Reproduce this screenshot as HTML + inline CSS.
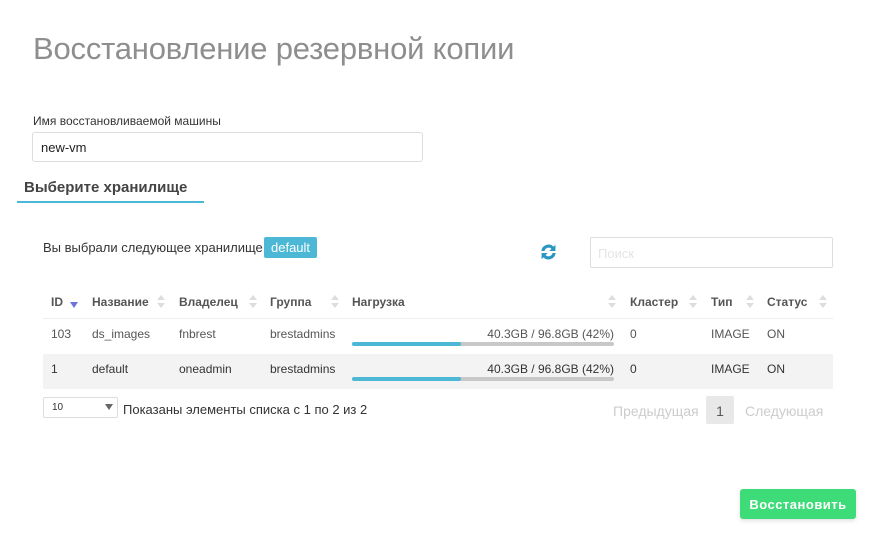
<!DOCTYPE html>
<html><head><meta charset="utf-8"><style>
*{margin:0;padding:0;box-sizing:border-box}
body{width:892px;height:554px;background:#fff;font-family:"Liberation Sans",sans-serif;color:#333;position:relative;overflow:hidden}
.a{position:absolute;white-space:nowrap}
.h{font-weight:bold;font-size:12px;color:#555}
.c{font-size:12px;color:#333}
.s{position:absolute;width:6px;height:14px}
.s:before{content:"";position:absolute;left:0;top:0;border-left:4px solid transparent;border-right:4px solid transparent;border-bottom:5px solid #ddd}
.s:after{content:"";position:absolute;left:0;top:8px;border-left:4px solid transparent;border-right:4px solid transparent;border-top:5px solid #ddd}
.bar{position:absolute;left:352px;width:262px;height:4px;background:#c8c8c8;border-radius:2px}
.bar i{position:absolute;left:0;top:0;height:4px;width:109px;background:#4cb8d5;border-radius:2px}
</style></head><body>
<div class="a" style="left:33px;top:31px;font-size:31px;color:#8e8e8e;letter-spacing:-0.2px">Восстановление резервной копии</div>
<div class="a" style="left:33px;top:114px;font-size:12px;color:#333">Имя восстановливаемой машины</div>
<div class="a" style="left:32px;top:132px;width:391px;height:30px;border:1px solid #ddd;border-radius:3px;font-size:13px;padding:7px 0 0 8px;color:#222">new-vm</div>
<div class="a" style="left:24px;top:179px;font-size:15px;font-weight:bold;color:#444">Выберите хранилище</div>
<div class="a" style="left:17px;top:201px;width:187px;height:2px;background:#4cb8d5"></div>
<div class="a" style="left:43px;top:240px;font-size:13px;color:#333">Вы выбрали следующее хранилище:</div>
<div class="a" style="left:264px;top:237px;width:53px;height:21px;background:#4cb8d5;border-radius:2px;color:#fff;font-size:13px;padding:3px 0 0 7px">default</div>
<svg class="a" style="left:539px;top:242px" width="19" height="20" viewBox="0 0 20 20"><path d="M2.5 9a7.5 7.5 0 0 1 12.8-4.6L17.3 2.5V9h-6.5l2.3-2.3A4.3 4.3 0 0 0 5.8 9z M17.5 11a7.5 7.5 0 0 1-12.8 4.6L2.7 17.5V11h6.5l-2.3 2.3A4.3 4.3 0 0 0 14.2 11z" fill="#2a97c3"/></svg>
<div class="a" style="left:590px;top:237px;width:243px;height:31px;border:1px solid #ddd;border-radius:2px;font-size:13px;color:#e4e4e4;padding:8px 0 0 7px">Поиск</div>

<div class="a h" style="left:51px;top:295px">ID</div>
<div class="a" style="left:70px;top:302px;border-left:4px solid transparent;border-right:4px solid transparent;border-top:6px solid #6f72d6"></div>
<div class="a h" style="left:92px;top:295px">Название</div><div class="s" style="left:157px;top:295px"></div>
<div class="a h" style="left:179px;top:295px">Владелец</div><div class="s" style="left:249px;top:295px"></div>
<div class="a h" style="left:270px;top:295px">Группа</div><div class="s" style="left:331px;top:295px"></div>
<div class="a h" style="left:352px;top:295px">Нагрузка</div><div class="s" style="left:608px;top:295px"></div>
<div class="a h" style="left:630px;top:295px">Кластер</div><div class="s" style="left:689px;top:295px"></div>
<div class="a h" style="left:711px;top:295px">Тип</div><div class="s" style="left:746px;top:295px"></div>
<div class="a h" style="left:767px;top:295px">Статус</div><div class="s" style="left:819px;top:295px"></div>
<div class="a" style="left:43px;top:318px;width:790px;height:1px;background:#eee"></div>

<div class="a c" style="left:51px;top:327px;color:#555">103</div>
<div class="a c" style="left:92px;top:327px;color:#555">ds_images</div>
<div class="a c" style="left:179px;top:327px;color:#555">fnbrest</div>
<div class="a c" style="left:270px;top:327px;color:#555">brestadmins</div>
<div class="a c" style="left:352px;top:327px;width:262px;text-align:right;color:#555">40.3GB / 96.8GB (42%)</div>
<div class="bar" style="top:342px"><i></i></div>
<div class="a c" style="left:630px;top:327px;color:#555">0</div>
<div class="a c" style="left:711px;top:327px;color:#555">IMAGE</div>
<div class="a c" style="left:767px;top:327px;color:#555">ON</div>

<div class="a" style="left:43px;top:354px;width:790px;height:35px;background:#f3f3f3"></div>
<div class="a c" style="left:51px;top:362px">1</div>
<div class="a c" style="left:92px;top:362px">default</div>
<div class="a c" style="left:179px;top:362px">oneadmin</div>
<div class="a c" style="left:270px;top:362px">brestadmins</div>
<div class="a c" style="left:352px;top:362px;width:262px;text-align:right">40.3GB / 96.8GB (42%)</div>
<div class="bar" style="top:377px"><i></i></div>
<div class="a c" style="left:630px;top:362px">0</div>
<div class="a c" style="left:711px;top:362px">IMAGE</div>
<div class="a c" style="left:767px;top:362px">ON</div>

<div class="a" style="left:43px;top:397px;width:75px;height:21px;border:1px solid #ddd;border-radius:2px;font-size:10px;padding:4px 0 0 8px;color:#333">10</div>
<div class="a" style="left:105px;top:404px;border-left:4px solid transparent;border-right:4px solid transparent;border-top:6px solid #666"></div>
<div class="a" style="left:123px;top:402px;font-size:13px;color:#333">Показаны элементы списка с 1 по 2 из 2</div>
<div class="a" style="left:613px;top:403px;font-size:14px;color:#ccc">Предыдущая</div>
<div class="a" style="left:706px;top:396px;width:28px;height:28px;background:#e8e8e8;border-radius:2px;font-size:14px;color:#555;text-align:center;padding-top:7px">1</div>
<div class="a" style="left:745px;top:403px;font-size:14px;color:#ccc">Следующая</div>

<div class="a" style="left:740px;top:489px;width:116px;height:30px;background:#3ddc78;border-radius:3px;color:#fff;font-size:13px;font-weight:bold;text-align:center;padding-top:8px;box-shadow:0 2px 4px rgba(0,0,0,.12);letter-spacing:0.5px">Восстановить</div>
</body></html>
